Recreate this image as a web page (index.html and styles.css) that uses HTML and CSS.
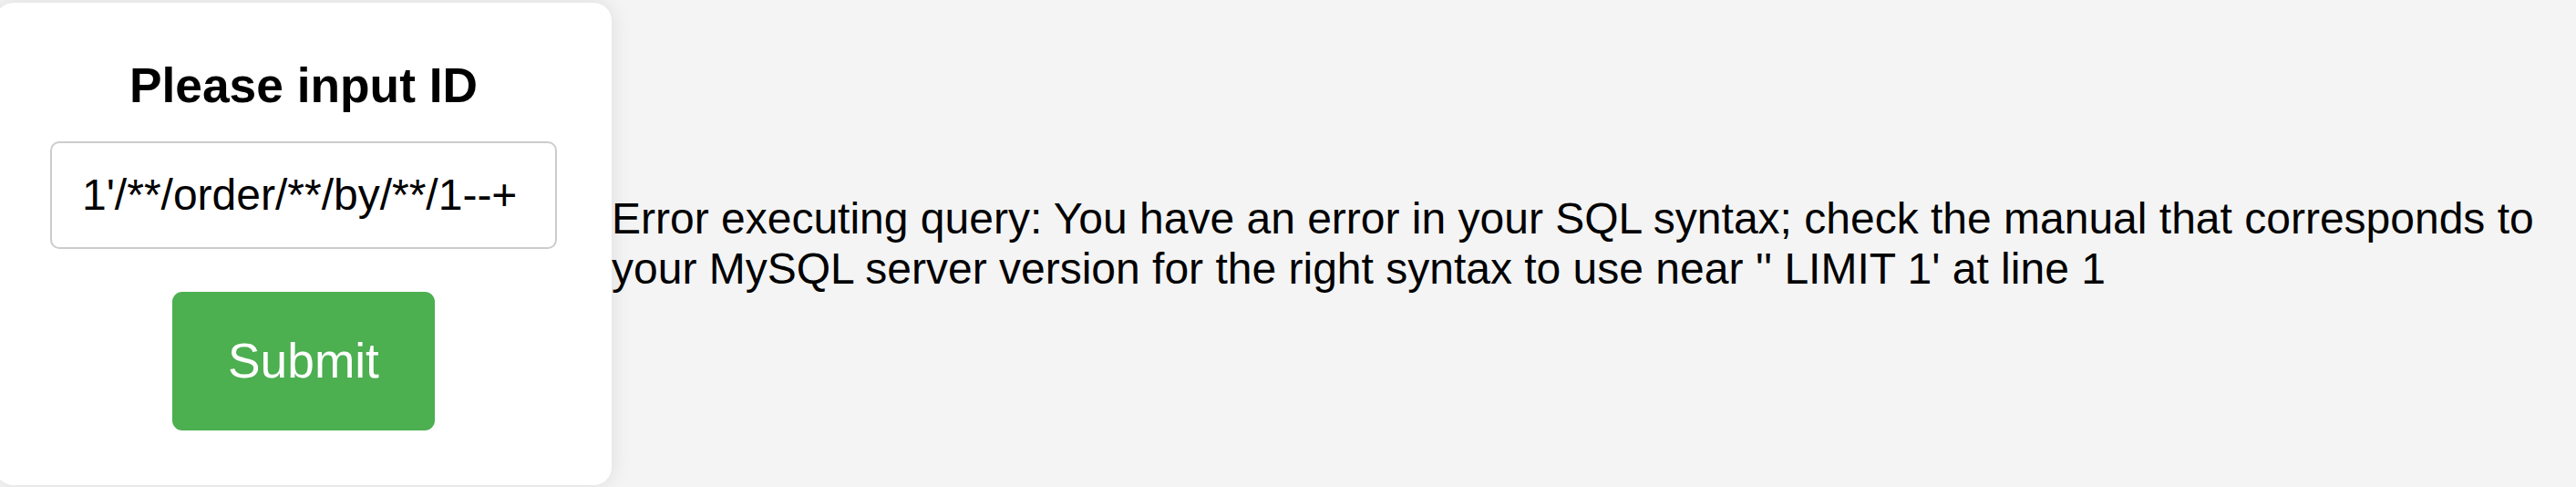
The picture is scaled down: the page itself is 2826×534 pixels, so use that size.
FILE: index.html
```html
<!DOCTYPE html>
<html lang="en">
<head>
<meta charset="utf-8">
<title>Please input ID</title>
<link rel="stylesheet" href="styles.css">
</head>
<body>
<div class="page">
  <form class="card">
    <h2 class="title">Please input ID</h2>
    <input class="field" type="text" name="id" value="1'/**/order/**/by/**/1--+">
    <button class="submit" type="button">Submit</button>
  </form>
  <p class="result">Error executing query: You have an error in your SQL syntax; check the manual that corresponds to your MySQL server version for the right syntax to use near '' LIMIT 1' at line 1</p>
</div>
</body>
</html>
```

FILE: styles.css
```css
html, body {
  margin: 0;
  padding: 0;
}

body {
  background: #f4f4f4;
  font-family: "Liberation Sans", Arial, sans-serif;
  color: #000;
  overflow: hidden;
}

.page {
  display: flex;
  align-items: center;
  height: 534px;
  width: 2826px;
}

.card {
  flex: none;
  box-sizing: border-box;
  width: 676px;
  margin-left: -5px;
  padding: 60px;
  background: #fff;
  border-radius: 20px;
  box-shadow: 0 0 22px rgba(0, 0, 0, 0.1);
  display: flex;
  flex-direction: column;
  align-items: center;
}

.title {
  margin: 0 0 31px 0;
  font-size: 53.3px;
  font-weight: bold;
  line-height: normal;
  text-align: center;
}

.field {
  box-sizing: border-box;
  width: 556px;
  height: 118.5px;
  margin: 0 0 46.5px 0;
  padding: 0 33px;
  border: 2px solid #cccccc;
  border-radius: 10px;
  background: #fff;
  font-family: "Liberation Sans", Arial, sans-serif;
  font-size: 48px;
  color: #000;
  outline: none;
}

.submit {
  box-sizing: border-box;
  width: 288px;
  height: 152px;
  padding: 0;
  border: none;
  border-radius: 11px;
  background: #4caf50;
  color: #fff;
  font-family: "Liberation Sans", Arial, sans-serif;
  font-size: 53.3px;
  cursor: pointer;
}

.result {
  flex: 1 1 auto;
  min-width: 0;
  margin: 0;
  font-size: 48px;
  line-height: 1.15;
}
```
